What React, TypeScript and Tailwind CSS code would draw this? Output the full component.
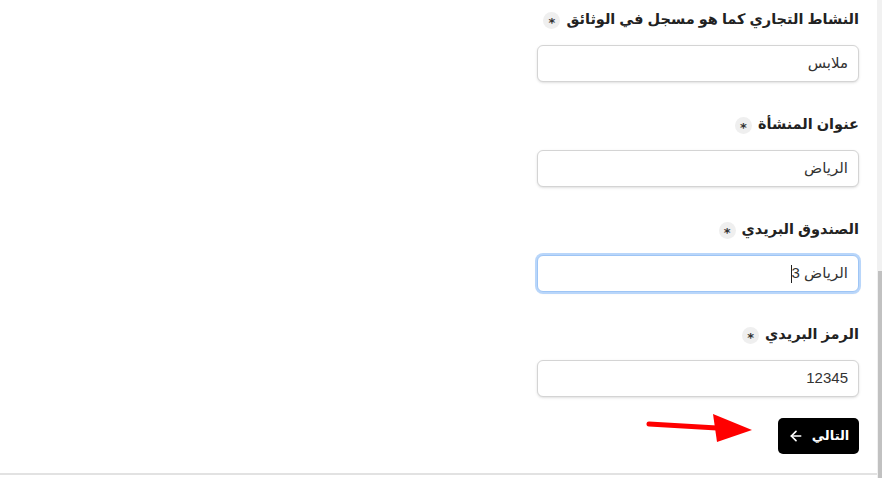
import { ArrowLeft } from 'lucide-react';

const fields = [
  { label: 'النشاط التجاري كما هو مسجل في الوثائق', value: 'ملابس' },
  { label: 'عنوان المنشأة', value: 'الرياض' },
  { label: 'الصندوق البريدي', value: 'الرياض 3', focused: true },
  { label: 'الرمز البريدي', value: '12345' },
];

function Required() {
  return (
    <span className="inline-flex items-center justify-center w-[17px] h-[17px] rounded-full bg-[#efefef] text-[#333] text-[13px] font-bold leading-none pt-[4px]">
      *
    </span>
  );
}

export default function App() {
  return (
    <div className="flex w-[882px] h-[478px] bg-white overflow-hidden" style={{ fontFamily: '"DejaVu Sans", Arial, sans-serif' }}>
      <div className="relative flex-1 flex flex-col">
        <div dir="rtl" className="flex-1 flex flex-col pt-[7px] pr-[18px]">
          <div className="w-[322px] flex flex-col gap-[30px]">
            {fields.map((f) => (
              <div key={f.label} className="flex flex-col">
                <div className="h-[26px] mb-[12px] flex items-center gap-[6px] whitespace-nowrap">
                  <span className="text-[14.5px] font-bold text-[#222]" style={{ fontFamily: 'Arial, "Liberation Sans", "DejaVu Sans", sans-serif' }}>
                    {f.label}
                  </span>
                  <Required />
                </div>
                <div
                  className={
                    f.focused
                      ? 'h-[37px] rounded-[6px] border border-[#9ec5f5] ring-2 ring-[#b9d6fa] bg-white flex items-center px-[10px] shadow-sm'
                      : 'h-[37px] rounded-[6px] border border-[#d4d4d4] bg-white flex items-center px-[10px] shadow-sm'
                  }
                >
                  <span className="text-[15px] text-[#333]" style={{ fontFamily: 'Arial, "Liberation Sans", "DejaVu Sans", sans-serif' }}>
                    {f.value}
                  </span>
                  {f.focused && <span className="w-px h-[18px] bg-[#222]" />}
                </div>
              </div>
            ))}
            <div className="-mt-[9px]">
              <button className="w-[81px] h-[36px] bg-black text-white rounded-[5px] flex items-center justify-center gap-[8px] text-[13px] font-bold" style={{ fontFamily: 'Arial, "Liberation Sans", "DejaVu Sans", sans-serif' }}>
                <span>التالي</span>
                <ArrowLeft size={16} strokeWidth={2.5} />
              </button>
            </div>
          </div>
        </div>
        <div className="h-[5px] border-t-2 border-[#e2e2e2]" />
        <svg className="absolute left-[645px] top-[410px]" width="112" height="34" viewBox="0 0 112 34">
          <line x1="4" y1="14" x2="72" y2="18" stroke="#f00" strokeWidth="5" strokeLinecap="round" />
          <polygon points="68,4 107,20 72,32" fill="#f00" />
        </svg>
      </div>
      <div className="w-[5px] bg-[#f1f1f1] flex flex-col">
        <div className="h-[271px]" />
        <div className="flex-1 bg-[#c1c1c1] ml-[1px]" />
      </div>
    </div>
  );
}
